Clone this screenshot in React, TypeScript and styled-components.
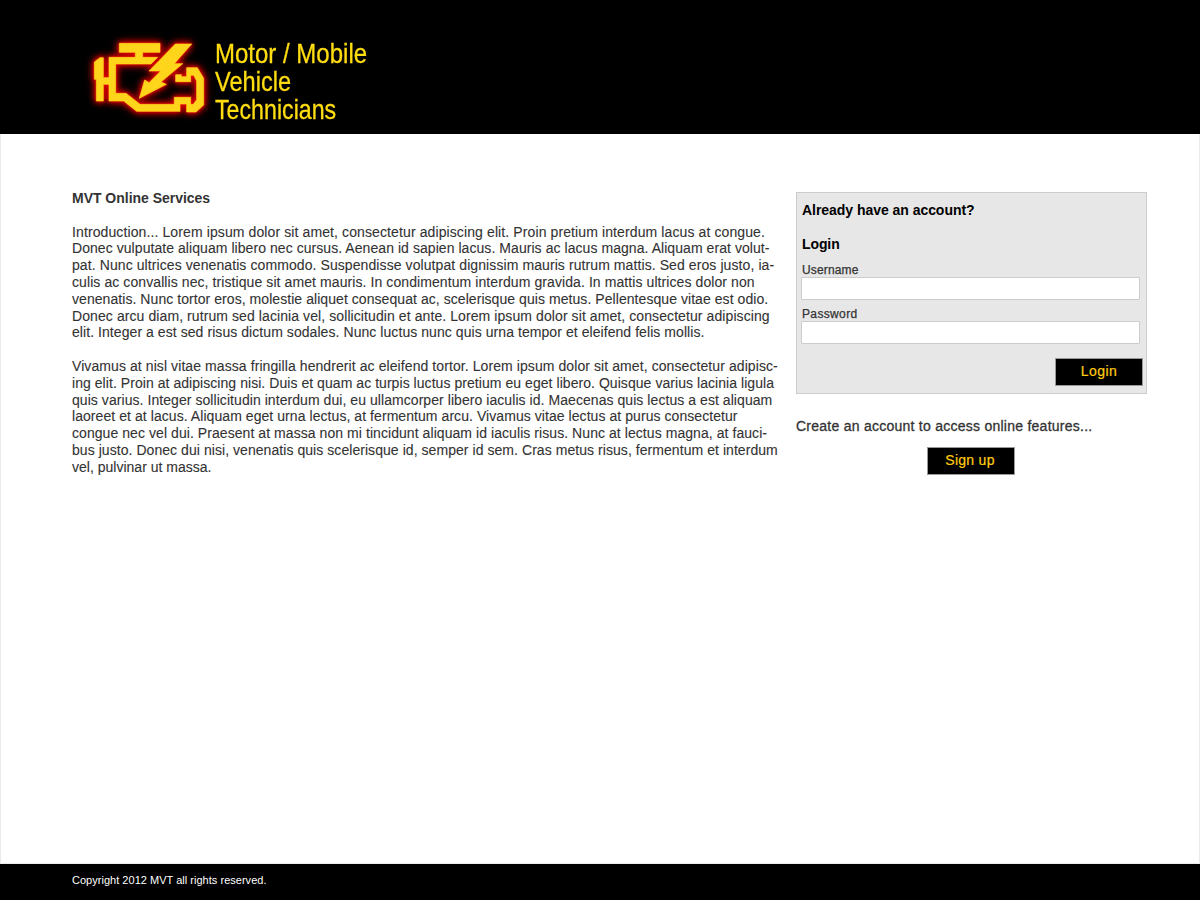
import React from "react";
import styled, { createGlobalStyle } from "styled-components";

const GlobalStyle = createGlobalStyle`
  *, *::before, *::after { box-sizing: border-box; }
  body {
    margin: 0;
    background: #fff;
    color: #333;
    font-family: "Liberation Sans", Arial, Helvetica, sans-serif;
    font-size: 14px;
  }
`;

const Page = styled.div`
  display: flex;
  flex-direction: column;
  width: 1200px;
  height: 900px;
  overflow: hidden;
`;

const Header = styled.header`
  display: flex;
  align-items: flex-start;
  flex: 0 0 134px;
  padding: 25px 0 0 80px;
  background: #000;
`;

const Emblem = styled.svg`
  flex: none;
  width: 140px;
  height: 109px;
  overflow: visible;
  filter: drop-shadow(0 0 1px #f00000) drop-shadow(0 0 3px #e00000) drop-shadow(0 0 3px #900000);
`;

const BrandName = styled.h1`
  margin: 15px 0 0 -5px;
  color: #fd1;
  font-size: 27.2px;
  font-weight: 400;
  line-height: 27.8px;
  -webkit-text-stroke: 0.3px #fd1;
`;

const BrandLine = styled.span<{ $scale: number }>`
  display: block;
  white-space: nowrap;
  transform: scaleX(${(p) => p.$scale});
  transform-origin: 0 0;
`;

const Main = styled.main`
  display: flex;
  align-items: flex-start;
  flex: 1;
  padding: 58px 52px 0 71px;
  border: 1px solid #ebebeb;
  border-top: 0;
`;

const Article = styled.article`
  width: 724px;
`;

const Heading = styled.h2<{ $tracking?: number }>`
  margin: 0;
  font-size: 14px;
  font-weight: 700;
  line-height: 17px;
  letter-spacing: ${(p) => p.$tracking ?? 0}px;
`;

const ArticleHeading = styled(Heading)`
  margin: -2px 0 16.7px;
`;

const Paragraph = styled.p`
  margin: 0 0 16.8px;
  line-height: 16.8px;
  -webkit-text-stroke: 0.1px #333;
`;

const Line = styled.span<{ $tracking: number }>`
  display: block;
  white-space: nowrap;
  letter-spacing: ${(p) => p.$tracking}px;
`;

const Sidebar = styled.aside`
  display: flex;
  flex-direction: column;
  width: 351px;
`;

const LoginBox = styled.form`
  display: flex;
  flex-direction: column;
  height: 202px;
  padding: 9px 3px 7px 4px;
  background: #e7e7e7;
  border: 1px solid #ccc;
`;

const BoxHeading = styled(Heading)`
  margin: 0 0 17px 1px;
  color: #000;
`;

const LoginHeading = styled(BoxHeading)`
  margin-bottom: 10px;
`;

const Label = styled.label<{ $tracking: number }>`
  display: block;
  height: 14px;
  margin-left: 1px;
  font-size: 12px;
  line-height: 15px;
  letter-spacing: ${(p) => p.$tracking}px;
  -webkit-text-stroke: 0.25px #333;
`;

const Field = styled.input`
  display: block;
  width: 339px;
  height: 23px;
  margin: 0 0 7px;
  padding: 0 4px;
  background: #fff;
  border: 1px solid #ccc;
  border-radius: 1px;
  outline: 0;
`;

const Button = styled.button<{ $tracking: number }>`
  width: 88px;
  height: 28px;
  padding: 0 0 2px;
  background: #000;
  border: 1px solid #999;
  color: #fc1;
  font: inherit;
  letter-spacing: ${(p) => p.$tracking}px;
  -webkit-text-stroke: 0.2px #fc1;
`;

const LoginButton = styled(Button)`
  margin: auto 0 0 auto;
`;

const Invite = styled.p`
  margin: 24px 0 13px;
  line-height: 16px;
  letter-spacing: 0.253px;
  white-space: nowrap;
  -webkit-text-stroke: 0.3px #333;
`;

const SignUpButton = styled(Button)`
  margin-left: 131px;
  padding-right: 2px;
`;

const Footer = styled.footer`
  flex: 0 0 36px;
  padding: 10px 0 0 72px;
  background: #000;
  color: #fff;
  font-size: 11px;
  line-height: 13px;
  letter-spacing: 0.023px;
`;

type TextLine = [text: string, tracking: number];

const paragraphs: TextLine[][] = [
  [
    ["Introduction... Lorem ipsum dolor sit amet, consectetur adipiscing elit. Proin pretium interdum lacus at congue.", 0.108],
    ["Donec vulputate aliquam libero nec cursus. Aenean id sapien lacus. Mauris ac lacus magna. Aliquam erat volut-", 0.059],
    ["pat. Nunc ultrices venenatis commodo. Suspendisse volutpat dignissim mauris rutrum mattis. Sed eros justo, ia-", 0.088],
    ["culis ac convallis nec, tristique sit amet mauris. In condimentum interdum gravida. In mattis ultrices dolor non", 0.086],
    ["venenatis. Nunc tortor eros, molestie aliquet consequat ac, scelerisque quis metus. Pellentesque vitae est odio.", 0.06],
    ["Donec arcu diam, rutrum sed lacinia vel, sollicitudin et ante. Lorem ipsum dolor sit amet, consectetur adipiscing", 0.087],
    ["elit. Integer a est sed risus dictum sodales. Nunc luctus nunc quis urna tempor et eleifend felis mollis.", 0.065],
  ],
  [
    ["Vivamus at nisl vitae massa fringilla hendrerit ac eleifend tortor. Lorem ipsum dolor sit amet, consectetur adipisc-", 0.083],
    ["ing elit. Proin at adipiscing nisi. Duis et quam ac turpis luctus pretium eu eget libero. Quisque varius lacinia ligula", 0.053],
    ["quis varius. Integer sollicitudin interdum dui, eu ullamcorper libero iaculis id. Maecenas quis lectus a est aliquam", 0.06],
    ["laoreet et at lacus. Aliquam eget urna lectus, at fermentum arcu. Vivamus vitae lectus at purus consectetur", 0.063],
    ["congue nec vel dui. Praesent at massa non mi tincidunt aliquam id iaculis risus. Nunc at lectus magna, at fauci-", 0.064],
    ["bus justo. Donec dui nisi, venenatis quis scelerisque id, semper id sem. Cras metus risus, fermentum et interdum", 0.056],
    ["vel, pulvinar ut massa.", 0.009],
  ],
];

function EngineEmblem() {
  return (
    <Emblem viewBox="0 0 420 327" aria-hidden="true">
      <g fill="#ffd51c" stroke="#ffd51c" strokeWidth="2">
        <path d="M118 55H240V82H188V97H233L213 117H107V205H138L180 238H283V217H332V238H340L350 224V168L341 151H332V170H287V149H304V155H320V128H352L371 160V240L348 261H320V237H300V259H170L131 228H87V178H70V228H49V163H43V111L60 98H70V158H87V97H166V82H118Z" />
        <path d="M286 57H335L283 116H308L243 171L259 178L178 220L194 165L207 173L242 138H207Z" />
      </g>
    </Emblem>
  );
}

export default function App() {
  return (
    <Page>
      <GlobalStyle />
      <Header>
        <EngineEmblem />
        <BrandName>
          <BrandLine $scale={0.883}>Motor / Mobile</BrandLine>
          <BrandLine $scale={0.868}>Vehicle</BrandLine>
          <BrandLine $scale={0.853}>Technicians</BrandLine>
        </BrandName>
      </Header>
      <Main>
        <Article>
          <ArticleHeading $tracking={-0.02}>MVT Online Services</ArticleHeading>
          {paragraphs.map((lines, i) => (
            <Paragraph key={i}>
              {lines.map(([text, tracking]) => (
                <Line key={text} $tracking={tracking}>{text}</Line>
              ))}
            </Paragraph>
          ))}
        </Article>
        <Sidebar>
          <LoginBox onSubmit={(e) => e.preventDefault()}>
            <BoxHeading $tracking={-0.04}>Already have an account?</BoxHeading>
            <LoginHeading as="h3" $tracking={-0.1}>Login</LoginHeading>
            <Label htmlFor="username" $tracking={0.143}>Username</Label>
            <Field id="username" type="text" />
            <Label htmlFor="password" $tracking={0.352}>Password</Label>
            <Field id="password" type="password" />
            <LoginButton type="submit" $tracking={0.447}>Login</LoginButton>
          </LoginBox>
          <Invite>Create an account to access online features...</Invite>
          <SignUpButton type="button" $tracking={0.288}>Sign up</SignUpButton>
        </Sidebar>
      </Main>
      <Footer>Copyright 2012 MVT all rights reserved.</Footer>
    </Page>
  );
}
